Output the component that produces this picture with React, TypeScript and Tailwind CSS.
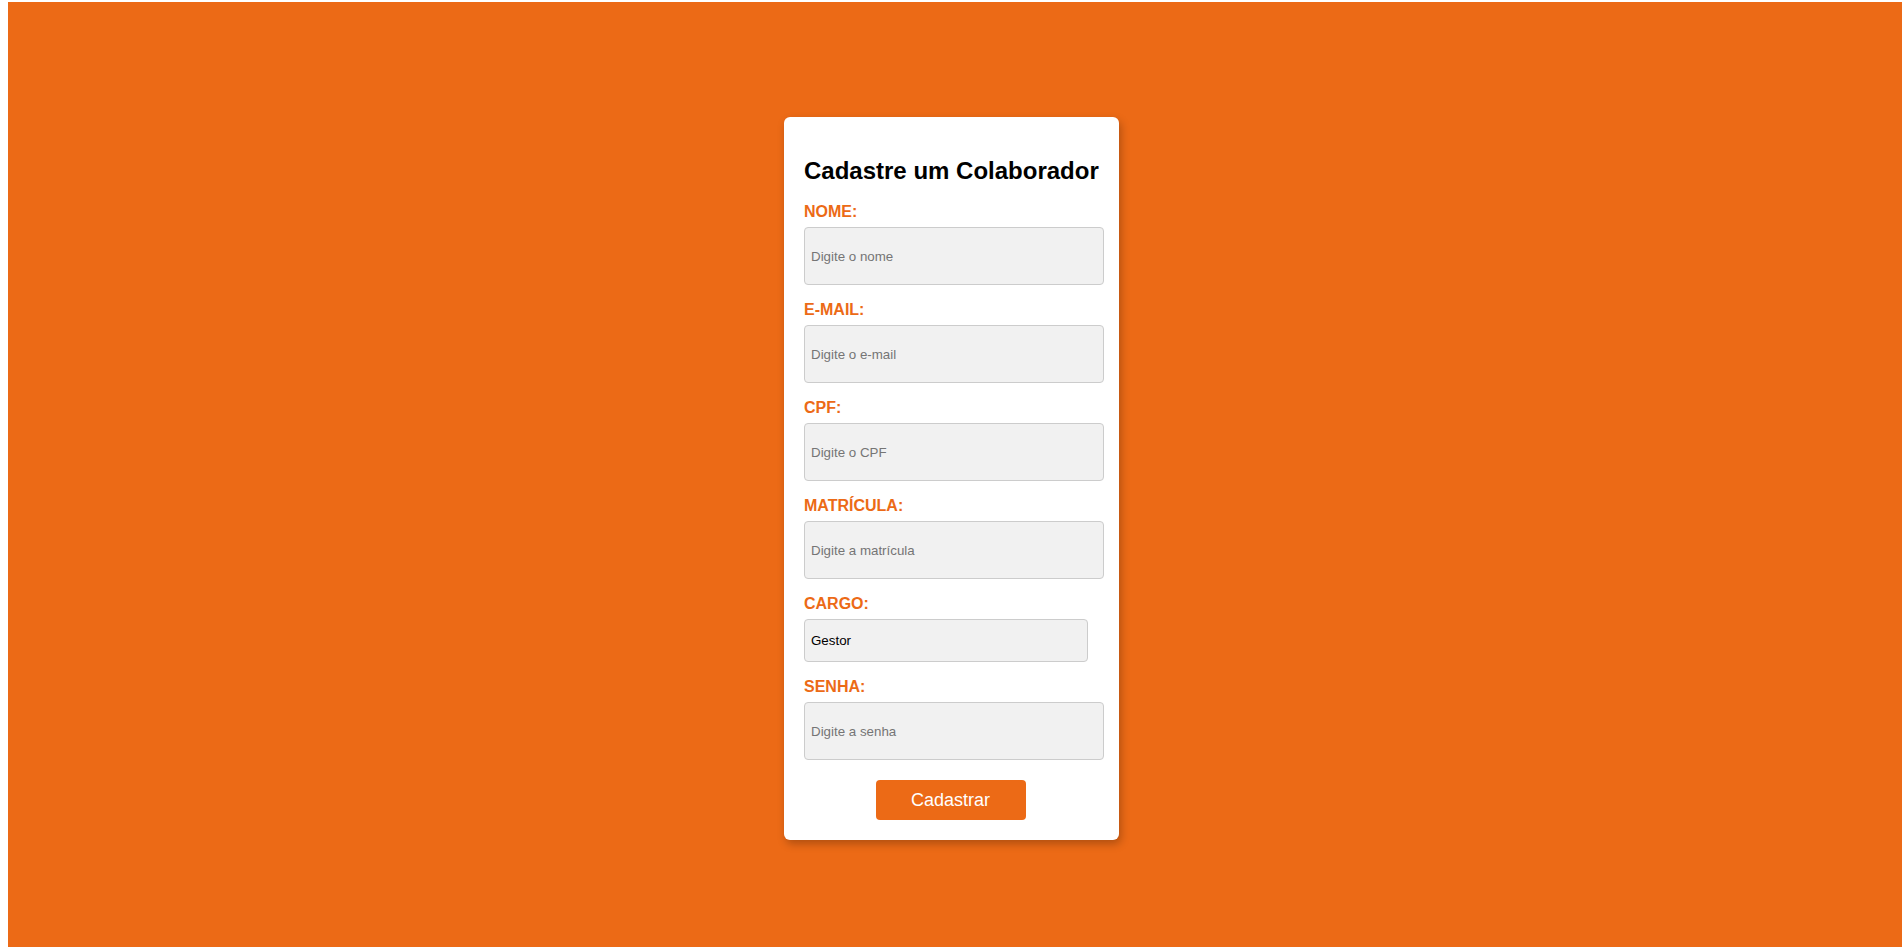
const fields = [
  { label: "NOME:", placeholder: "Digite o nome", type: "text" },
  { label: "E-MAIL:", placeholder: "Digite o e-mail", type: "email" },
  { label: "CPF:", placeholder: "Digite o CPF", type: "text" },
  { label: "MATRÍCULA:", placeholder: "Digite a matrícula", type: "text" },
];

function Label({ children }: { children: React.ReactNode }) {
  return (
    <label className="block text-[16px] leading-[18px] font-bold text-[#ec6a16] mb-[6px]">
      {children}
    </label>
  );
}

export default function App() {
  return (
    <div className="h-screen bg-white pl-2 pt-[2px] overflow-hidden font-['Liberation_Sans',Arial,sans-serif]">
      <div className="h-full bg-[#ec6a16] flex justify-center items-start pt-[115px] pr-[7px]">
        <form
          onSubmit={(e) => e.preventDefault()}
          className="w-[335px] bg-white rounded-[6px] pl-5 pr-[15px] pt-5 pb-5 shadow-[2px_4px_8px_rgba(0,0,0,0.25)] flex flex-col"
        >
          <h2 className="mt-[20px] mb-[19px] text-[24px] leading-[27px] font-bold text-black">
            Cadastre um Colaborador
          </h2>

          {fields.map((f) => (
            <div key={f.label} className="mb-4">
              <Label>{f.label}</Label>
              <input
                type={f.type}
                placeholder={f.placeholder}
                className="w-[300px] h-[58px] px-[6px] bg-[#f1f1f1] border border-[#cccccc] rounded-[4px] text-[13.33px] text-black placeholder:text-[#757575] outline-none"
              />
            </div>
          ))}

          {/* Cargo */}
          <div className="mb-4">
            <Label>CARGO:</Label>
            <select
              defaultValue="Gestor"
              className="w-[284px] h-[43px] px-[6px] bg-[#f1f1f1] border border-[#cccccc] rounded-[4px] text-[13.33px] text-black appearance-none outline-none"
            >
              <option>Gestor</option>
              <option>Colaborador</option>
            </select>
          </div>

          <div>
            <Label>SENHA:</Label>
            <input
              type="password"
              placeholder="Digite a senha"
              className="w-[300px] h-[58px] px-[6px] bg-[#f1f1f1] border border-[#cccccc] rounded-[4px] text-[13.33px] text-black placeholder:text-[#757575] outline-none"
            />
          </div>

          <button
            type="submit"
            className="self-center mr-[7px] mt-5 w-[150px] h-[40px] rounded-[4px] bg-[#ec6a16] text-white text-[18px]"
          >
            Cadastrar
          </button>
        </form>
      </div>
    </div>
  );
}
